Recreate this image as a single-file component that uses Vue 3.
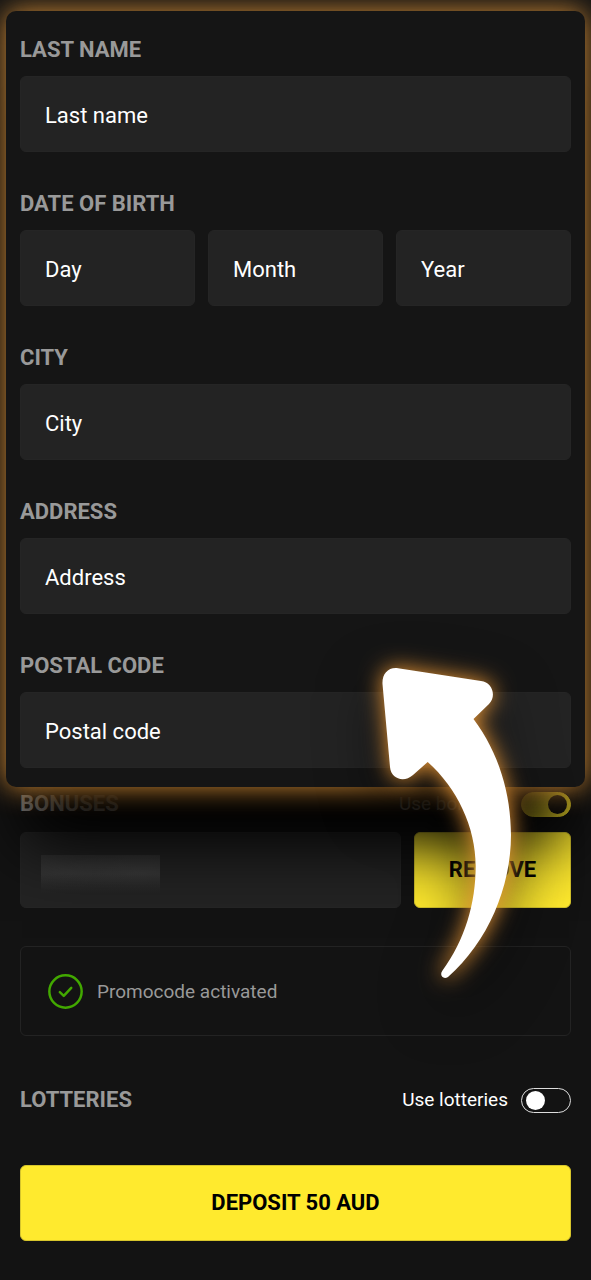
<script setup>
import { ref } from 'vue'

const groups = [
  { id: 'last-name', title: 'Last name', fields: ['Last name'] },
  { id: 'birth', title: 'Date of birth', fields: ['Day', 'Month', 'Year'] },
  { id: 'city', title: 'City', fields: ['City'] },
  { id: 'address', title: 'Address', fields: ['Address'] },
  { id: 'postal', title: 'Postal code', fields: ['Postal code'] },
]
const useBonuses = ref(true)
const useLotteries = ref(false)
</script>

<template>
  <main class="page">
    <form class="card" @submit.prevent>
      <div v-for="g in groups" :key="g.id" class="group">
        <label class="title" :for="g.id + '-0'">{{ g.title }}</label>
        <div class="fields">
          <input
            v-for="(f, i) in g.fields"
            :id="g.id + '-' + i"
            :key="f"
            class="field"
            type="text"
            :placeholder="f"
            :aria-label="f"
          />
        </div>
      </div>
    </form>

    <section class="bonuses">
      <div class="row">
        <h2 class="title">Bonuses</h2>
        <label class="switch dim">Use bonuses<input v-model="useBonuses" type="checkbox" class="toggle" /></label>
      </div>
      <div class="promo">
        <div class="code">
          <input class="field" type="text" aria-label="Promocode" readonly />
          <span class="mask"></span>
        </div>
        <button type="button" class="btn">Remove</button>
      </div>
    </section>

    <div class="notice">
      <svg class="check" viewBox="0 0 34 34" aria-hidden="true">
        <circle cx="17" cy="17" r="15.7" />
        <path d="M11.5 17.6 L15.3 21.2 L22.6 13.4" />
      </svg>
      <span>Promocode activated</span>
    </div>

    <div class="row lotteries">
      <h2 class="title">Lotteries</h2>
      <label class="switch">Use lotteries<input v-model="useLotteries" type="checkbox" class="toggle" /></label>
    </div>

    <button type="button" class="btn deposit">Deposit 50 AUD</button>

    <svg class="arrow" viewBox="340 640 200 360" aria-hidden="true">
      <path
        d="M398 668.2 L481 681 C492 682 497 696 489 704 L473.5 719
           C499 753 511 794 511 835 C511 887 488 942 448 977
           C443 980 439 975 442.5 970.5
           C465 940 475.7 903 475.7 866 C475.7 827 457 788 427.7 762
           L413 775 C404 783 391 779 390 767 L382.5 684 C382 674 388 667 398 668.2 Z"
      />
    </svg>
  </main>
</template>

<style>
body {
  margin: 0;
  background: #131313;
}
</style>

<style scoped>
.page {
  position: relative;
  box-sizing: border-box;
  overflow: hidden;
  padding: 11px 20px 39px;
  background: #131313;
  color: #fff;
  font-family: Roboto, "Liberation Sans", sans-serif;
  font-size: 22px;
}
.card {
  position: relative;
  z-index: 1;
  display: grid;
  gap: 39px;
  margin: 0 -14px;
  padding: 26px 14px 19px;
  border-radius: 10px;
  background: #151515;
  box-shadow:
    0 0 28px rgba(226, 150, 58, 0.95),
    0 72px 64px -16px #000;
}
.title {
  display: block;
  margin: 0;
  color: #999;
  font-size: 22px;
  font-weight: 700;
  line-height: 26px;
  text-transform: uppercase;
}
.fields {
  display: grid;
  grid-auto-flow: column;
  grid-auto-columns: 1fr;
  gap: 13px;
  margin-top: 13px;
}
.field {
  display: block;
  box-sizing: border-box;
  width: 100%;
  min-width: 0;
  height: 76px;
  padding: 2px 24px 0;
  border: 1px solid #252525;
  border-radius: 6px;
  outline: 0;
  background: #232323;
  color: #fff;
  font: inherit;
}
.field::placeholder {
  color: #fff;
  opacity: 1;
}
.bonuses {
  margin-top: 4px;
}
.row {
  display: flex;
  align-items: center;
  justify-content: space-between;
}
.switch {
  display: flex;
  align-items: center;
  gap: 13px;
  font-size: 19px;
  line-height: 26px;
}
.dim {
  color: #bbb;
}
.toggle {
  appearance: none;
  box-sizing: border-box;
  width: 50px;
  height: 25px;
  margin: 0;
  padding: 2px 3px 2px 4px;
  border: 1px solid #ddd;
  border-radius: 13px;
}
.toggle::before {
  content: "";
  display: block;
  width: 19px;
  height: 19px;
  border-radius: 50%;
  background: #fff;
}
.toggle:checked {
  border-color: #ffea2e;
  background: #ffea2e;
}
.toggle:checked::before {
  margin-left: auto;
  background: #131313;
}
.promo {
  display: grid;
  grid-template-columns: 1fr 157px;
  gap: 13px;
  margin-top: 15px;
}
.code {
  position: relative;
}
.mask {
  position: absolute;
  top: 23px;
  left: 21px;
  width: 119px;
  height: 38px;
  background:
    linear-gradient(transparent 50%, #232323),
    radial-gradient(ellipse at 25% 45%, #383838, transparent 60%),
    radial-gradient(ellipse at 80% 45%, #3a3a3a, transparent 60%),
    #303030;
}
.btn {
  box-sizing: border-box;
  height: 76px;
  padding: 0 0 2px;
  border: 1px solid #d6c52c;
  border-radius: 6px;
  background: #ffea2e;
  color: #000;
  font: 700 22px Roboto, "Liberation Sans", sans-serif;
  text-transform: uppercase;
}
.notice {
  display: flex;
  align-items: center;
  gap: 14px;
  box-sizing: border-box;
  height: 90px;
  margin-top: 38px;
  padding: 0 27px;
  border: 1px solid #232323;
  border-radius: 6px;
  color: #999;
  font-size: 19px;
}
.check {
  width: 35px;
  height: 35px;
  fill: none;
  stroke: #42a800;
  stroke-width: 2.4;
  stroke-linecap: round;
  stroke-linejoin: round;
}
.lotteries {
  margin-top: 51px;
}
.deposit {
  display: block;
  width: 100%;
  margin-top: 52px;
}
.arrow {
  position: absolute;
  z-index: 2;
  top: 640px;
  right: 51px;
  width: 200px;
  height: 360px;
  overflow: visible;
  pointer-events: none;
  fill: #fff;
  filter: drop-shadow(0 0 11px rgb(240, 155, 55)) drop-shadow(0 24px 28px rgba(0, 0, 0, 0.6));
}
</style>
